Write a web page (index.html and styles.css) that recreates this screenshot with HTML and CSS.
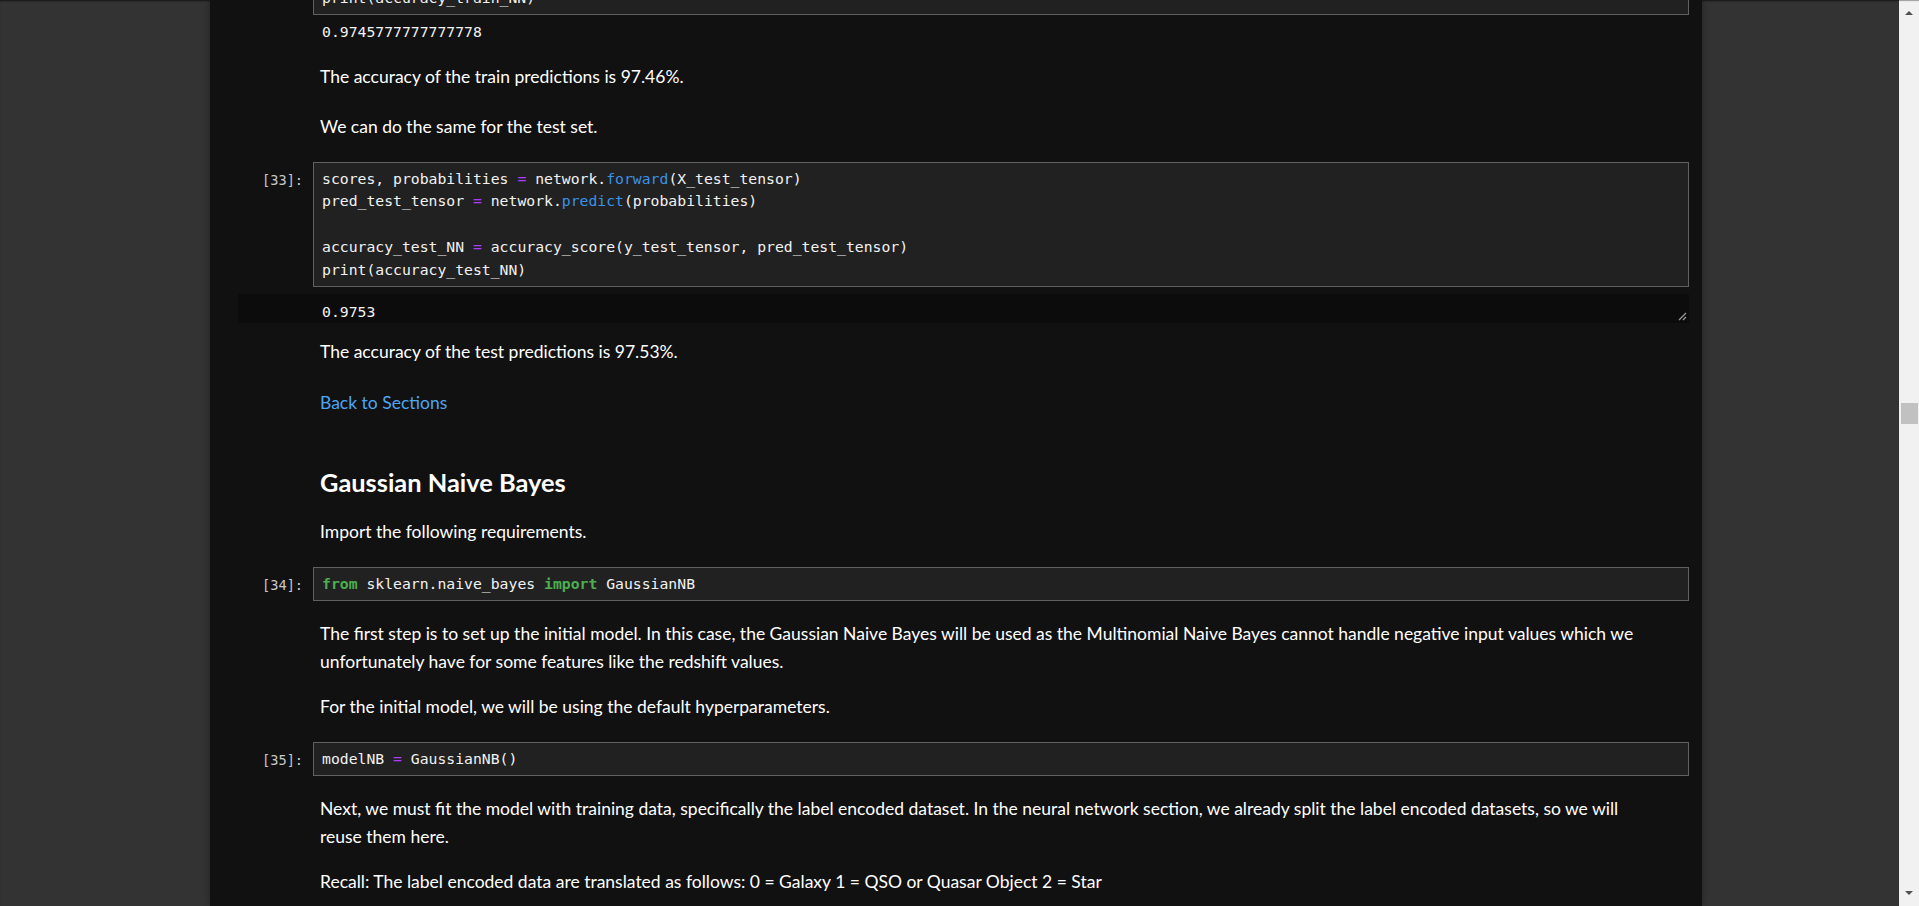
FILE: index.html
```html
<!DOCTYPE html>
<html lang="en">
<head>
<meta charset="utf-8">
<title>Notebook</title>
<link rel="stylesheet" href="styles.css">
</head>
<body>
<div class="app">
  <main class="workspace">
    <div class="notebook">
      <div class="cell code clipped">
        <div class="prompt"></div>
        <div class="editor">
          <div class="line">print(accuracy_train_NN)</div>
        </div>
      </div>
      <div class="output"><div class="line">0.9745777777777778</div></div>

      <div class="cell md"><p>The accuracy of the train predictions is 97.46%.</p></div>
      <div class="cell md"><p>We can do the same for the test set.</p></div>

      <div class="cell code">
        <div class="prompt">[33]:</div>
        <div class="editor">
          <div class="line">scores, probabilities <span class="op">=</span> network.<span class="prop">forward</span>(X_test_tensor)</div>
          <div class="line">pred_test_tensor <span class="op">=</span> network.<span class="prop">predict</span>(probabilities)</div>
          <div class="line"><br></div>
          <div class="line">accuracy_test_NN <span class="op">=</span> accuracy_score(y_test_tensor, pred_test_tensor)</div>
          <div class="line">print(accuracy_test_NN)</div>
        </div>
      </div>
      <div class="output scrolled"><div class="line">0.9753</div><svg class="grip" width="9" height="9" viewBox="0 0 9 9"><path d="M1 8 L8 1 M5 8 L8 5" stroke="#9a9a9a" stroke-width="1.3"/></svg></div>

      <div class="cell md"><p>The accuracy of the test predictions is 97.53%.</p></div>
      <div class="cell md"><p><a href="#sections">Back to Sections</a></p></div>
      <div class="cell md">
        <h2>Gaussian Naive Bayes</h2>
        <p>Import the following requirements.</p>
      </div>

      <div class="cell code">
        <div class="prompt">[34]:</div>
        <div class="editor">
          <div class="line"><span class="kw">from</span> sklearn.naive_bayes <span class="kw">import</span> GaussianNB</div>
        </div>
      </div>

      <div class="cell md">
        <p>The first step is to set up the initial model. In this case, the Gaussian Naive Bayes will be used as the Multinomial Naive Bayes cannot handle negative input values which we<br>unfortunately have for some features like the redshift values.</p>
        <p>For the initial model, we will be using the default hyperparameters.</p>
      </div>

      <div class="cell code">
        <div class="prompt">[35]:</div>
        <div class="editor">
          <div class="line">modelNB <span class="op">=</span> GaussianNB()</div>
        </div>
      </div>

      <div class="cell md">
        <p>Next, we must fit the model with training data, specifically the label encoded dataset. In the neural network section, we already split the label encoded datasets, so we will<br>reuse them here.</p>
        <p>Recall: The label encoded data are translated as follows: 0 = Galaxy 1 = QSO or Quasar Object 2 = Star</p>
      </div>
    </div>
  </main>
  <div class="scrollbar">
    <div class="arrow up"></div>
    <div class="thumb"></div>
    <div class="arrow down"></div>
  </div>
</div>
</body>
</html>
```
FILE: styles.css
```css
* { box-sizing: border-box; }

html, body {
  margin: 0;
  padding: 0;
  height: 100%;
  overflow: hidden;
  background: #333333;
}

.app {
  display: flex;
  height: 906px;
}

.workspace {
  flex: 1;
  padding-left: 210px;
  background: #333333;
  box-shadow: inset 0 2px 2px -1px rgba(0, 0, 0, 0.6);
  overflow: hidden;
}

.notebook {
  width: 1492px;
  height: 100%;
  background: #111111;
  padding-right: 13px;
  box-shadow: 0 0 6px rgba(0, 0, 0, 0.35);
  color: #ffffff;
  font-family: "Lato", "Segoe UI", sans-serif;
  font-size: 17.5px;
  overflow: hidden;
}

.cell { display: flow-root; }

/* ---------- code cells ---------- */
.cell.code {
  display: grid;
  grid-template-columns: 103px 1fr;
  align-items: start;
}

.prompt {
  font-family: "DejaVu Sans Mono", monospace;
  font-size: 13.6px;
  line-height: 22.8px;
  padding-top: 7px;
  padding-right: 10px;
  text-align: right;
  color: #c8c8c8;
}

.editor {
  background: #212121;
  border: 1px solid #616161;
  padding: 4.5px 8px;
  font-family: "DejaVu Sans Mono", monospace;
  font-size: 14.75px;
  color: #f2f2f2;
  overflow: hidden;
}

.line {
  line-height: 22.8px;
  height: 22.8px;
  white-space: pre;
}

.cell.clipped { margin-top: -19px; }

.op { color: #b13cff; }
.prop { color: #3a92e8; }
.kw { color: #4caf50; font-weight: bold; }

/* ---------- outputs ---------- */
.output {
  padding: 6px 0 2px 112px;
  font-family: "DejaVu Sans Mono", monospace;
  font-size: 14.75px;
  color: #f2f2f2;
}

.output.scrolled {
  position: relative;
  margin-left: 28px;
  padding: 7px 0 0 84px;
  height: 29px;
  background: #0c0c0c;
  overflow: hidden;
}

.grip {
  position: absolute;
  right: 2px;
  bottom: 2px;
}

/* ---------- markdown cells ---------- */
.cell.md {
  padding-left: 110px;
}

.md p {
  margin: 0;
  line-height: 28px;
}

.md p + p { margin-top: 17.5px; }

.md h2 {
  margin: 27px 0 20px;
  font-size: 25.4px;
  font-weight: 700;
  line-height: 32px;
}

.md a {
  color: #4ea6f2;
  text-decoration: none;
}

/* ---------- vertical rhythm between cells ---------- */
.output + .md { margin-top: 17px; }
.output.scrolled + .md { margin-top: 15px; }
.md + .md { margin-top: 22.5px; }
.md + .code { margin-top: 21px; }
.code + .md { margin-top: 18.7px; }
.code + .output { margin-top: 0; }
.code + .output.scrolled { margin-top: 7px; }

/* ---------- scrollbar ---------- */
.scrollbar {
  position: relative;
  width: 20px;
  background: #f1f1f1;
  box-shadow: inset 0 2px 1px -1px rgba(0, 0, 0, 0.35);
}

.thumb {
  position: absolute;
  top: 403px;
  left: 2px;
  width: 17px;
  height: 21px;
  background: #c1c1c1;
}

.arrow {
  position: absolute;
  left: 6px;
  width: 0;
  height: 0;
  border-left: 4px solid transparent;
  border-right: 4px solid transparent;
}

.arrow.up {
  top: 11px;
  border-bottom: 4px solid #505050;
}

.arrow.down {
  bottom: 11px;
  border-top: 4px solid #505050;
}
```
